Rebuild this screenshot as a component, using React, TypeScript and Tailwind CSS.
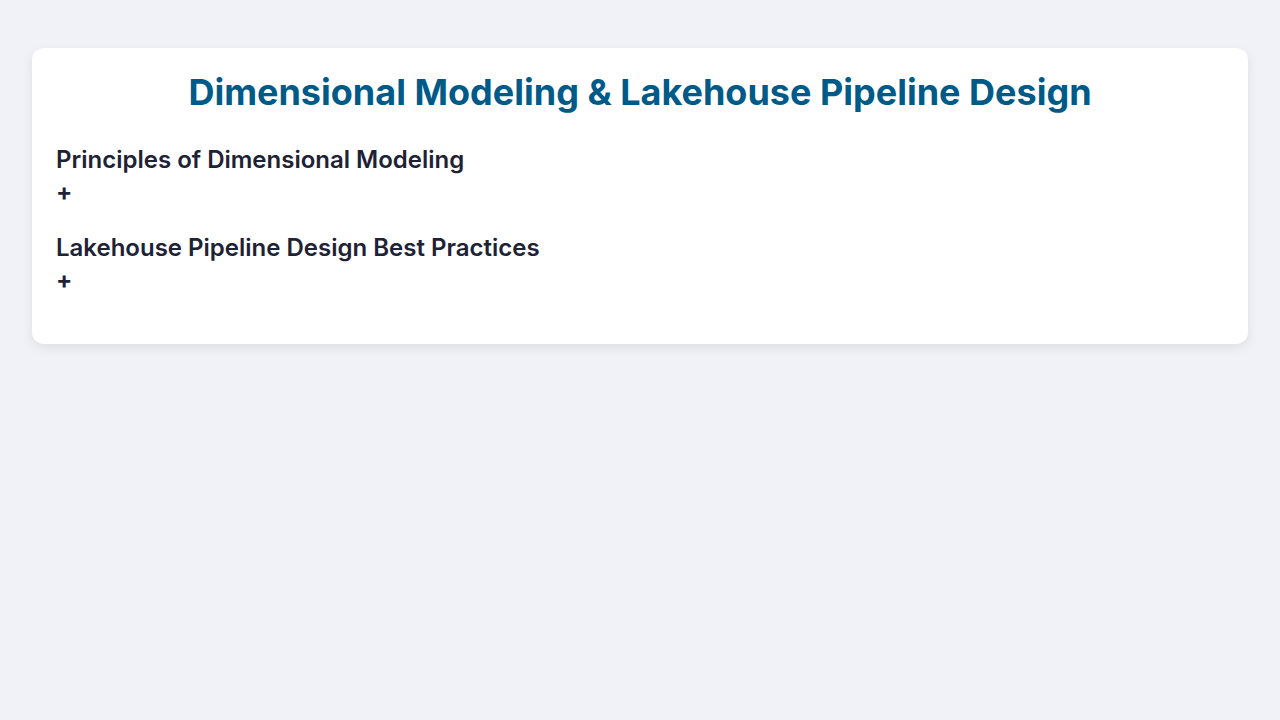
const sections = [
  'Principles of Dimensional Modeling',
  'Lakehouse Pipeline Design Best Practices',
];

export default function App() {
  return (
    <div className="min-h-screen bg-[#f0f2f7] px-8 py-12 font-['Inter',sans-serif] text-[#1e2235]">
      <div className="rounded-xl bg-white p-6 shadow-[0_4px_12px_rgba(0,0,0,0.08)]">
        <h1 className="mb-8 text-center text-4xl font-bold text-[#005a87]">
          Dimensional Modeling &amp; Lakehouse Pipeline Design
        </h1>
        {sections.map((title) => (
          <div key={title} className="mb-6">
            <h2 className="text-2xl font-semibold leading-8">{title}</h2>
            <div className="text-2xl font-bold leading-8">+</div>
          </div>
        ))}
      </div>
    </div>
  );
}
